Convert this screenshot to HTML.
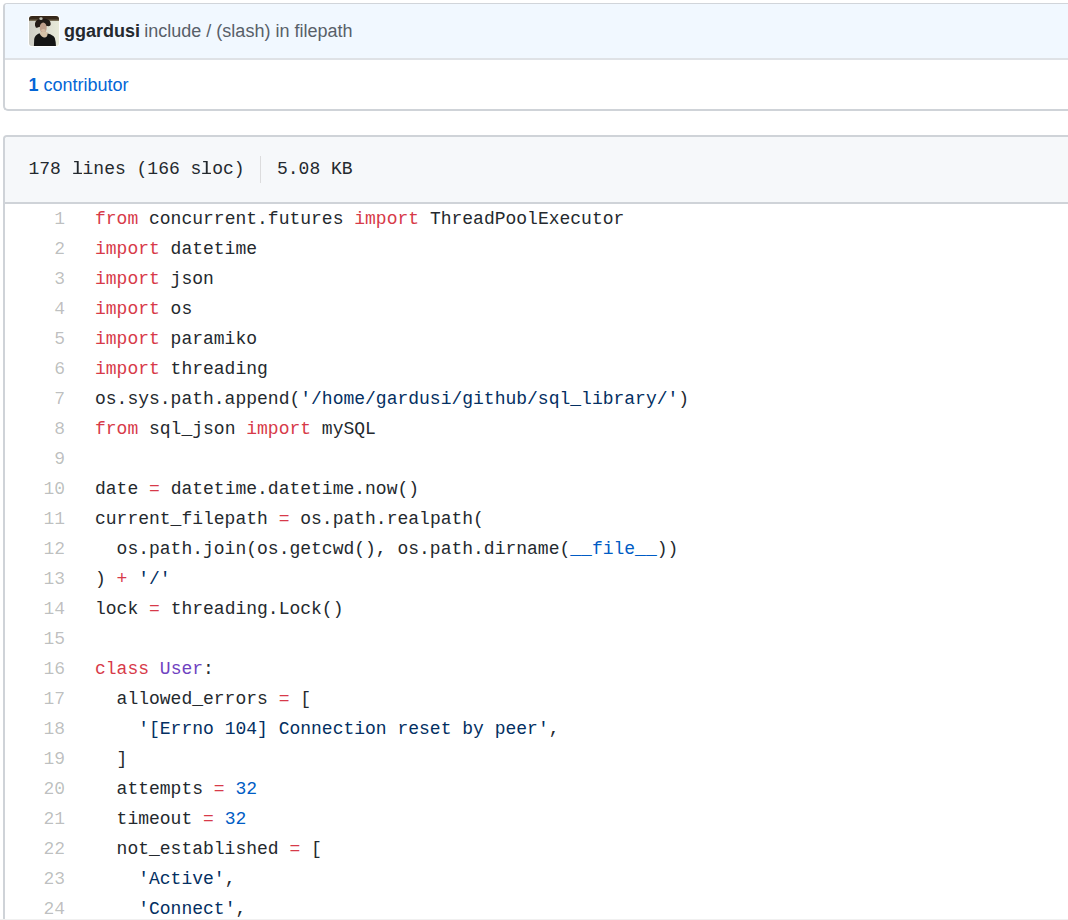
<!DOCTYPE html>
<html><head><meta charset="utf-8">
<style>
html,body{margin:0;padding:0;background:#fff;width:1068px;height:920px;overflow:hidden;position:relative}
body{font-family:"Liberation Sans",sans-serif;color:#24292e}
.box{position:absolute;left:3px;width:1200px;box-sizing:border-box;border-left:2px solid #cfd3d8;border-radius:4px 0 0 5px}
#b1{top:3px;height:108px;border-top:1px solid #d1d5da;border-bottom:2px solid #cfd3d8}
#h1{position:absolute;left:0;top:0;right:0;height:54px;background:#f1f8ff;border-bottom:2px solid #dfe2e6;border-radius:3px 0 0 0}
#av{position:absolute;left:24px;top:12px;width:30px;height:30px;border-radius:3px;overflow:hidden;box-shadow:0 0 0 1px #fff}
#t1{position:absolute;left:59px;top:15px;font-size:18px;line-height:24px;white-space:pre}
#t1 b{color:#24292e}
#t1 span{color:#586069;margin-left:-0.7px}
#c1{position:absolute;left:23.5px;top:69px;font-size:18px;line-height:24px;color:#0366d6;white-space:pre}
#b2{top:135px;height:800px;border-top:2px solid #cfd3d8;border-radius:4px 0 0 0}
#h2{position:absolute;left:0;top:0;right:0;height:65px;background:#f6f8fa;border-bottom:2px solid #cfd3d8;border-radius:2px 0 0 0}
.L{position:relative;color:transparent}
.L .g{position:absolute;left:0;top:0;fill:#24292e}
.mono{font-family:"Liberation Mono",monospace}
#t2{position:absolute;left:23.5px;top:20px;font-size:18px;line-height:24px;white-space:pre;color:#24292e}
#sep{position:absolute;left:255px;top:19px;width:1px;height:27px;background:#dcdcdd}
#t3{position:absolute;left:272px;top:20px;font-size:18px;line-height:24px;white-space:pre;color:#24292e}
#code{position:absolute;left:0px;top:67px;font-family:"Liberation Mono",monospace;font-size:18px;line-height:30px}
.ln{position:absolute;left:0;width:60px;text-align:right;color:rgba(27,31,35,.3)}
.lc{position:absolute;left:90px;white-space:pre;color:#24292e}
.k{color:#d73a49}.s{color:#032f62}.c1{color:#005cc5}.e{color:#6f42c1}
</style></head><body>
<div class="box" id="b1">
  <div id="h1">
    <div id="av"><svg width="30" height="30" viewBox="0 0 30 30" style="display:block">
<defs>
<linearGradient id="bg" x1="0" y1="0" x2="1" y2="0"><stop offset="0" stop-color="#cbcbc4"/><stop offset="0.5" stop-color="#dcdcd0"/><stop offset="1" stop-color="#e9ebd9"/></linearGradient>
<linearGradient id="band" x1="0" y1="0" x2="0" y2="1"><stop offset="0" stop-color="#2e2014"/><stop offset="0.7" stop-color="#3a2c1c"/><stop offset="1" stop-color="#8a8068"/></linearGradient>
<filter id="bl" x="-10%" y="-10%" width="120%" height="120%"><feGaussianBlur stdDeviation="0.6"/></filter>
</defs>
<g>
<rect x="-2" y="-2" width="34" height="34" fill="url(#bg)"/>
<rect x="-2" y="-2" width="34" height="7" fill="url(#band)"/>
<path d="M6 9.5 Q5.6 5 9 3.6 Q14 1.6 19 3.6 Q22.2 5.5 21.6 9 Q21 10.5 18.5 10 L10 11 Q8 12.3 6.8 11.5 Z" fill="#221a16"/>
<ellipse cx="12" cy="2.7" rx="1.7" ry="1.4" fill="#bdbdb0"/>
<ellipse cx="14.2" cy="11.8" rx="3.5" ry="5.3" fill="#bf9e8a"/><ellipse cx="14.3" cy="14.5" rx="2.2" ry="1.6" fill="#d6bca4"/>
<path d="M11.2 16 L18.5 16 L19 21.5 L11 21.5 Z" fill="#d6c2a8"/>
<path d="M4.8 32 L5.2 23 Q6 19 10.5 17.3 Q13 21.8 15.5 21.6 Q18.5 21.3 18.6 17.5 Q24.5 19 25.8 22 Q27 26 27 32 Z" fill="#151515"/>
</g>
</svg></div>
    <div id="t1"><b>ggardusi</b><span> include / (slash) in filepath</span></div>
  </div>
  <div id="c1"><b>1</b> contributor</div>
</div>
<div class="box" id="b2">
  <div id="h2">
    <div id="t2" class="mono">178 <span class="L">l<svg class="g" width="11" height="20" viewBox="0 0 11 20"><path transform="translate(0 15) scale(0.0087890625 -0.0087890625)" d="M760 142H1135V0H133V142H548V1342H240V1484H760Z"/></svg></span>ines (166 s<span class="L">l<svg class="g" width="11" height="20" viewBox="0 0 11 20"><path transform="translate(0 15) scale(0.0087890625 -0.0087890625)" d="M760 142H1135V0H133V142H548V1342H240V1484H760Z"/></svg></span>oc)</div>
    <div id="sep"></div>
    <div id="t3" class="mono">5.08 KB</div>
  </div>
  <div id="code">
<div class="ln" style="top:0">1</div><div class="lc" style="top:0"><span class="k">from</span> concurrent.futures <span class="k">import</span> ThreadPoolExecutor</div>
<div class="ln" style="top:30px">2</div><div class="lc" style="top:30px"><span class="k">import</span> datetime</div>
<div class="ln" style="top:60px">3</div><div class="lc" style="top:60px"><span class="k">import</span> json</div>
<div class="ln" style="top:90px">4</div><div class="lc" style="top:90px"><span class="k">import</span> os</div>
<div class="ln" style="top:120px">5</div><div class="lc" style="top:120px"><span class="k">import</span> paramiko</div>
<div class="ln" style="top:150px">6</div><div class="lc" style="top:150px"><span class="k">import</span> threading</div>
<div class="ln" style="top:180px">7</div><div class="lc" style="top:180px">os.sys.path.append(<span class="s">'/home/gardusi/github/sql_library/'</span>)</div>
<div class="ln" style="top:210px">8</div><div class="lc" style="top:210px"><span class="k">from</span> sql_json <span class="k">import</span> mySQL</div>
<div class="ln" style="top:240px">9</div><div class="lc" style="top:240px"> </div>
<div class="ln" style="top:270px">10</div><div class="lc" style="top:270px">date <span class="k">=</span> datetime.datetime.now()</div>
<div class="ln" style="top:300px">11</div><div class="lc" style="top:300px">current_filepath <span class="k">=</span> os.path.realpath(</div>
<div class="ln" style="top:330px">12</div><div class="lc" style="top:330px">  os.path.join(os.getcwd(), os.path.dirname(<span class="c1">__file__</span>))</div>
<div class="ln" style="top:360px">13</div><div class="lc" style="top:360px">) <span class="k">+</span> <span class="s">'/'</span></div>
<div class="ln" style="top:390px">14</div><div class="lc" style="top:390px">lock <span class="k">=</span> threading.Lock()</div>
<div class="ln" style="top:420px">15</div><div class="lc" style="top:420px"> </div>
<div class="ln" style="top:450px">16</div><div class="lc" style="top:450px"><span class="k">class</span> <span class="e">User</span>:</div>
<div class="ln" style="top:480px">17</div><div class="lc" style="top:480px">  allowed_errors <span class="k">=</span> [</div>
<div class="ln" style="top:510px">18</div><div class="lc" style="top:510px">    <span class="s">'[Errno 104] Connection reset by peer'</span>,</div>
<div class="ln" style="top:540px">19</div><div class="lc" style="top:540px">  ]</div>
<div class="ln" style="top:570px">20</div><div class="lc" style="top:570px">  attempts <span class="k">=</span> <span class="c1">32</span></div>
<div class="ln" style="top:600px">21</div><div class="lc" style="top:600px">  timeout <span class="k">=</span> <span class="c1">32</span></div>
<div class="ln" style="top:630px">22</div><div class="lc" style="top:630px">  not_established <span class="k">=</span> [</div>
<div class="ln" style="top:660px">23</div><div class="lc" style="top:660px">    <span class="s">'Active'</span>,</div>
<div class="ln" style="top:690px">24</div><div class="lc" style="top:690px">    <span class="s">'Connect'</span>,</div>
  </div>
</div>
<div style="position:absolute;left:0;top:919px;width:1068px;height:1px;background:#f0f0f0"></div>
</body></html>
